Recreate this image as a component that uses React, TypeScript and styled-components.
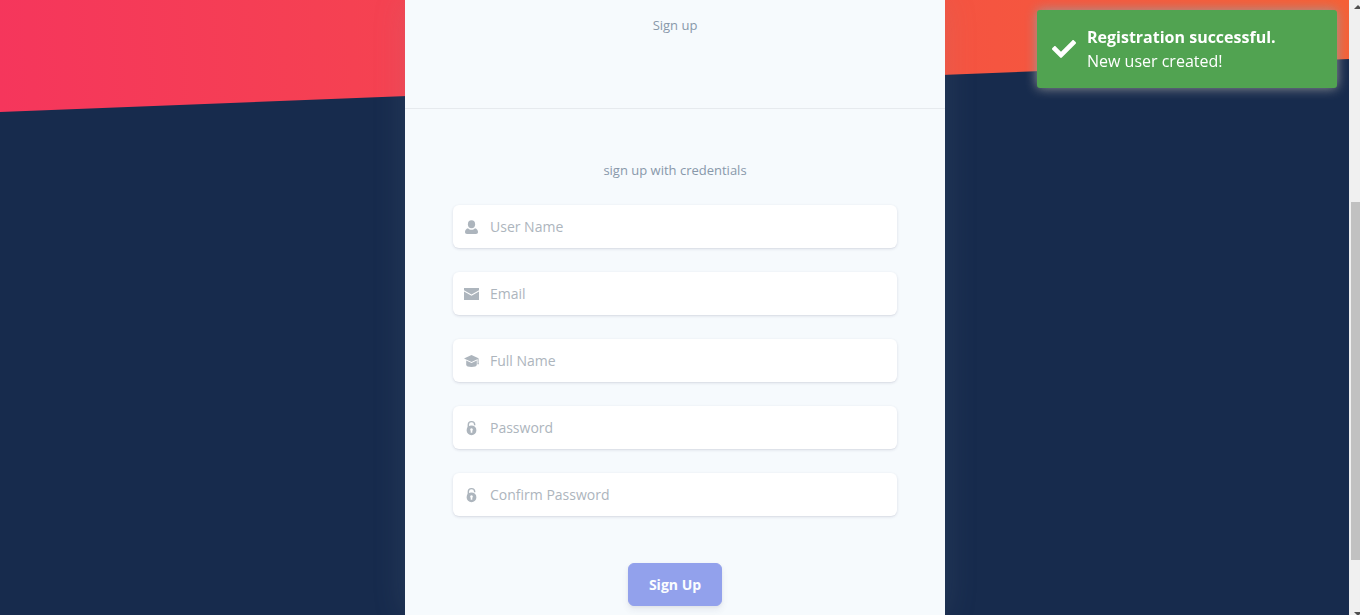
import React from "react";
import styled, { createGlobalStyle } from "styled-components";

const GlobalStyle = createGlobalStyle`
  *, *::before, *::after { box-sizing: border-box; }
  body {
    margin: 0;
    background: #172b4d;
    font-family: "Open Sans", sans-serif;
    font-size: 16px;
    line-height: 24px;
  }
`;

const Viewport = styled.div`
  display: grid;
  grid-template-columns: minmax(0, 1fr) 11px;
  height: 100vh;
  overflow: hidden;
`;

const Page = styled.main`
  position: relative;
  display: flex;
  justify-content: center;
  min-height: 100%;
  padding-left: 1px;
  background: #172b4d;
`;

const Banner = styled.div`
  position: absolute;
  top: 0;
  left: 0;
  right: 0;
  height: 112px;
  background: linear-gradient(87deg, #f5365c, #f56036);
  clip-path: polygon(0 0, 100% 0, 100% 59px, 0 100%);
`;

const Card = styled.section`
  position: relative;
  width: 100%;
  max-width: 540px;
  background: #f6fafd;
  box-shadow: 0 0 32px rgba(136, 152, 170, 0.15);
`;

const CardHeader = styled.header`
  height: 109px;
  padding-top: 13px;
  border-bottom: 1px solid #e6eaee;
`;

const Caption = styled.p`
  margin: 0;
  color: #8898aa;
  font-size: 13px;
  line-height: 24px;
  text-align: center;
`;

const Form = styled.form`
  display: flex;
  flex-direction: column;
  gap: 24px;
  padding: 48px;

  ${Caption} {
    line-height: 26px;
    margin-bottom: -2px;
  }
`;

const Field = styled.label`
  display: flex;
  align-items: center;
  height: 43px;
  padding: 0 11px;
  gap: 11px;
  border-radius: 6px;
  background: #fff;
  color: #adb5bd;
  box-shadow: 0 1px 3px rgba(50, 50, 93, 0.15), 0 1px 0 rgba(0, 0, 0, 0.02);
`;

const Input = styled.input`
  flex: 1;
  min-width: 0;
  padding: 0;
  border: 0;
  outline: 0;
  background: transparent;
  color: #8898aa;
  font: 14px/21px "Open Sans", sans-serif;

  &::placeholder {
    color: #adb5bd;
    opacity: 1;
  }
`;

const SubmitButton = styled.button`
  align-self: center;
  height: 43px;
  margin-top: 23px;
  padding: 0 20px;
  border: 1px solid #5e72e4;
  border-radius: 6px;
  background: #5e72e4;
  color: #fff;
  font: 700 14px/21px "Open Sans", sans-serif;
  opacity: 0.65;
  box-shadow: 0 4px 6px rgba(50, 50, 93, 0.11), 0 1px 3px rgba(0, 0, 0, 0.08);
`;

const Toast = styled.div`
  position: fixed;
  top: 10px;
  right: 23px;
  display: flex;
  align-items: center;
  gap: 11px;
  width: 300px;
  padding: 15px;
  border-radius: 3px;
  background: #51a351;
  color: #fff;
  box-shadow: 0 0 12px #999;
`;

const ToastTitle = styled.div`
  font-weight: 700;
`;

const Scrollbar = styled.div`
  display: flex;
  flex-direction: column;
  justify-content: space-between;
  align-items: flex-end;
  background: #f0f0f0;
  overflow: hidden;
`;

const Track = styled.div`
  flex: 1;
  display: grid;
  grid-template-rows: 185fr 358fr 38fr;
  width: 9px;
`;

const Thumb = styled.div`
  grid-row: 2;
  background: #c1c1c1;
`;

const Arrow = ({ down = false }: { down?: boolean }) => (
  <svg width="9" height="17" viewBox="0 0 9 17" fill="#505050" aria-hidden="true">
    <path d={down ? "M3 14h8l-4 4z" : "M3 9h8l-4-4z"} />
  </svg>
);

const UserIcon = () => (
  <>
    <ellipse cx="7.5" cy="4.2" rx="3.6" ry="4" />
    <path d="M4 8.2c1 1 2.200 1.500 3.500 1.500s2.500-.5 3.500-1.500c1.900.6 3 2 3 3.900 0 1.300-.7 1.900-2 1.900H3c-1.300 0-2-.6-2-1.900C1 10.200 2.100 8.800 4 8.200z" />
  </>
);

const MailIcon = () => (
  <>
    <path d="M0 1h15v2.300L7.500 7.400 0 3.300z" />
    <path d="M0 4.600l7.500 4.100L15 4.600V13H0z" />
  </>
);

const HatIcon = () => (
  <>
    <path d="M7.500 1L15 4.500 7.500 8 0 4.500z" />
    <path d="M2.200 6.500l5.300 2.500 5.300-2.500v4.200c0 1.300-2.200 2.300-5.300 2.300s-5.300-1-5.300-2.300z" />
    <path d="M13.600 5h1v3.500l.4 1.800h-1.700l.3-1.800z" />
  </>
);

const LockIcon = () => (
  <>
    <path d="M4.300 7V3.700a3.200 3.100 0 0 1 6.400 0v.6" fill="none" stroke="currentColor" strokeWidth="1.400" />
    <path
      fillRule="evenodd"
      d="M7.500 4.400a4.900 4.900 0 1 1 0 9.800 4.900 4.900 0 0 1 0-9.800zm0 2.900a1.400 1.400 0 0 0-.8 2.500v1.900h1.600v-1.900a1.400 1.400 0 0 0-.8-2.500z"
    />
  </>
);

const fields = [
  { name: "username", label: "User Name", type: "text", Icon: UserIcon },
  { name: "email", label: "Email", type: "email", Icon: MailIcon },
  { name: "fullname", label: "Full Name", type: "text", Icon: HatIcon },
  { name: "password", label: "Password", type: "password", Icon: LockIcon },
  { name: "confirm", label: "Confirm Password", type: "password", Icon: LockIcon },
];

export default function App() {
  return (
    <Viewport>
      <GlobalStyle />
      <Page>
        <Banner />
        <Card>
          <CardHeader>
            <Caption>Sign up</Caption>
          </CardHeader>
          <Form onSubmit={(event) => event.preventDefault()}>
            <Caption>sign up with credentials</Caption>
            {fields.map(({ name, label, type, Icon }) => (
              <Field key={name} htmlFor={name}>
                <svg width="15" height="15" viewBox="0 -1 15 15" fill="currentColor" overflow="visible" aria-hidden="true">
                  <Icon />
                </svg>
                <Input id={name} name={name} type={type} placeholder={label} aria-label={label} />
              </Field>
            ))}
            <SubmitButton type="submit">Sign Up</SubmitButton>
          </Form>
        </Card>
      </Page>
      <Scrollbar aria-hidden="true">
        <Arrow />
        <Track>
          <Thumb />
        </Track>
        <Arrow down />
      </Scrollbar>
      <Toast role="alert">
        <svg width="24" height="24" viewBox="0 0 512 512" fill="currentColor" aria-hidden="true">
          <path d="M173.898 439.404l-166.400-166.400c-9.997-9.997-9.997-26.206 0-36.204l36.203-36.204c9.997-9.998 26.207-9.998 36.204 0L192 312.690 432.095 72.596c9.997-9.997 26.207-9.997 36.204 0l36.203 36.204c9.997 9.997 9.997 26.206 0 36.204l-294.400 294.401c-9.998 9.997-26.207 9.997-36.204-.001z" />
        </svg>
        <div>
          <ToastTitle>Registration successful.</ToastTitle>
          <div>New user created!</div>
        </div>
      </Toast>
    </Viewport>
  );
}
